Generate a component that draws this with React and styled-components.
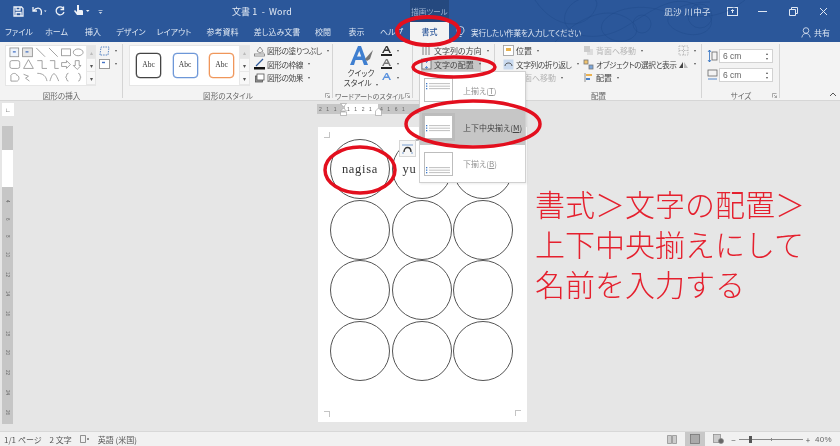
import React from "react";
import styled, { createGlobalStyle } from "styled-components";

const Global = createGlobalStyle`
  html, body { margin: 0; padding: 0; background: #e6e6e6; }
  * { box-sizing: border-box; }
  body { font-family: "Noto Sans CJK JP", "Liberation Sans", sans-serif; font-feature-settings: "palt"; }
`;

const Shell = styled.div`
  position: relative; width: 840px; height: 446px; overflow: hidden;
  display: flex; flex-direction: column; background: #e6e6e6; filter: blur(.35px);
`;

/* ---------- title bar ---------- */
const TitleBar = styled.div`
  position: relative; height: 22px; flex: none; background: #2b579a; color: #e4ebf5;
  display: flex; align-items: center; font-size: 8.5px;
`;
const Quick = styled.div`
  width: 232px; padding-left: 13px; display: flex; align-items: center; gap: 8px;
`;
const DocTitle = styled.div`
  width: 178px; font-size: 9px; letter-spacing: .1px; white-space: pre;
`;
const ContextTab = styled.div`
  width: 39px; height: 22px; background: #25497f; color: #9fb4d2; font-size: 7.5px;
  display: flex; align-items: center; justify-content: center; white-space: nowrap;
`;
const Account = styled.div`
  margin-left: auto; padding-right: 1px; display: flex; align-items: center;
`;
const UserName = styled.span` margin-right: 6px; font-size: 8.5px; letter-spacing: .4px; `;
const WinBtn = styled.span` width: 30.500px; display: flex; justify-content: center; `;
const Swirl = styled.svg` position: absolute; left: 530px; top: 0; pointer-events: none; `;

/* ---------- tabs ---------- */
const TabBar = styled.div`
  height: 20px; flex: none; background: #2b579a; color: #dde6f2; display: flex; align-items: center;
  font-size: 8px;
`;
const Tab = styled.div`
  width: ${p => p.$w}px; text-align: center; white-space: nowrap; height: 20px; line-height: 20px;
  ${p => p.$active && "background:#f3f3f3;color:#2b579a;font-weight:500;"}
`;
const TellMe = styled.div`
  margin-left: 7px; display: flex; align-items: center; gap: 6px; color: #dfe7f3; font-size: 7.6px; letter-spacing: -.2px; white-space: nowrap;
`;
const Share = styled.div`
  margin-left: auto; padding-right: 10px; display: flex; align-items: center; gap: 3px; font-size: 8px;
`;

/* ---------- ribbon ---------- */
const Ribbon = styled.div`
  height: 59px; flex: none; background: #f3f3f3; border-bottom: 1px solid #d6d6d6;
  display: flex; color: #444; font-size: 8px; position: relative;
`;
const Group = styled.div`
  width: ${p => p.$w}px; flex: none; display: flex; flex-direction: column; position: relative;
  &::after { content: ""; position: absolute; right: 0; top: 2px; bottom: 2px; width: 1px; background: #d4d4d4; }
`;
const GroupBody = styled.div` flex: 1; display: flex; min-height: 0; `;
const GroupLabel = styled.div`
  height: 10px; line-height: 12px; text-align: ${p => p.$tight ? "left" : "center"}; color: #666; white-space: nowrap; position: relative;
  font-size: ${p => p.$tight ? "7.1px" : "7.6px"}; padding-left: ${p => p.$tight ? "2px" : "0"};
`;
const Launcher = styled.svg` position: absolute; right: 3px; top: 3px; `;
const Gallery = styled.div`
  margin: 3px 0 0 ${p => p.$left}px; height: 41px; width: ${p => p.$w}px; background: #fff; border: 1px solid #e6e6e6; display: flex; flex: none;
`;
const GalleryMain = styled.div`
  flex: 1; display: flex; align-items: center; justify-content: ${p => p.$spread ? "space-between" : "flex-start"}; padding: ${p => p.$spread ? "0 5px 0 6px" : "0 0 0 1px"};
`;
const ScrollCol = styled.div`
  width: 10px; display: grid; grid-template-rows: repeat(3, 1fr); background: #f6f6f6; border-left: 1px solid #e8e8e8;
  color: #666; font-size: 6px; text-align: center;
`;
const ScrollCell = styled.div`
  display: flex; align-items: center; justify-content: center; border-bottom: 1px solid #e8e8e8;
  background: ${p => p.$off ? "#e5e5e5" : "#f8f8f8"}; color: ${p => p.$off ? "#bbb" : "#555"};
`;
const AbcBox = styled.div`
  width: 25px; height: 25px; border-radius: 4px; border: 1px solid ${p => p.$c}; color: #333; background: #fff;
  font-family: "Liberation Serif", serif; font-size: 7.5px; display: flex; align-items: center; justify-content: center; padding-bottom: 3px;
  box-shadow: 0 0 0 .3px ${p => p.$c};
`;
const Stack = styled.div`
  margin: 2px 0 0 ${p => p.$left || 0}px; display: flex; flex-direction: column; width: ${p => p.$w ? p.$w + "px" : "auto"}; flex: none;
`;
const Cmd = styled.div`
  height: 13.500px; flex: none; display: flex; align-items: center; gap: 2px; white-space: nowrap; font-size: 8px;
  color: ${p => p.$off ? "#b4b4b4" : "#444"};
  ${p => p.$tight && "font-size:7.7px;letter-spacing:-.4px;"}
  ${p => p.$hot && "background:#c6c6c6;width:60px;"}
  & > svg { flex: none; }
`;
const Caret = styled.span`
  display: inline-block; width: 0; height: 0; margin-left: 3px; border-left: 1.8px solid transparent; border-right: 1.8px solid transparent;
  border-top: 2.2px solid #555; flex: none;
`;
const QuickStyle = styled.div`
  width: 36px; margin: 3px 0 0 10px; display: flex; flex-direction: column; align-items: center; line-height: 10px; font-size: 7.8px; white-space: nowrap; flex: none;
`;
const SizeStack = styled.div` margin: 4px 0 0 5px; display: flex; flex-direction: column; flex: none; `;
const SizeRow = styled.div` display: flex; align-items: center; height: 19.500px; gap: 1px; `;
const SizeInput = styled.div`
  width: 54px; height: 14px; background: #fff; border: 1px solid #d2d2d2; display: flex; align-items: center; justify-content: space-between;
  padding: 0 4px 0 3px; font-size: 8.5px; color: #666; font-family: "Liberation Sans", sans-serif;
`;
const Spin = styled.span` display: flex; flex-direction: column; font-size: 4px; line-height: 5px; color: #555; `;
const Collapse = styled.svg` position: absolute; right: 3px; bottom: 3px; `;

/* ---------- workspace ---------- */
const Workspace = styled.div`
  flex: 1; min-height: 0; display: flex; background: #e6e6e6;
`;
const LeftRail = styled.div`
  width: 318px; flex: none; padding: 2px 0 0 2px; display: flex; flex-direction: column;
`;
const Corner = styled.div`
  width: 12px; height: 13px; background: #fff; display: flex; align-items: center; justify-content: center;
  font-size: 6px; color: #333; font-weight: 700; font-family: "Liberation Sans", sans-serif;
`;
const VRuler = styled.div`
  margin-top: 10px; width: 11px; height: 298px; background: #c6c6c6; position: relative; display: flex; flex-direction: column;
  align-items: center; color: #666; font-size: 4.5px; font-family: "Liberation Sans", sans-serif;
`;
const VWhite = styled.div` margin-top: 24px; width: 11px; height: 37px; background: #fff; flex: none; `;
const VNums = styled.div`
  flex: 1; display: flex; flex-direction: column; justify-content: space-around; align-items: center; padding: 6px 0 2px; 
`;
const VNum = styled.span` writing-mode: vertical-rl; `;
const PageCol = styled.div` flex: 1; display: flex; flex-direction: column; `;
const HRuler = styled.div`
  position: relative; margin: 3px 0 13px -1px; height: 10px; width: 105px; background: #c6c6c6; display: flex; font-size: 5px; color: #666;
  font-family: "Liberation Sans", sans-serif; line-height: 10px; letter-spacing: 1.6px; flex: none;
`;
const HGray = styled.div` width: ${p => p.$w}px; padding-left: 2px; white-space: nowrap; overflow: hidden; `;
const HWhite = styled.div` width: 33px; background: #fff; white-space: nowrap; overflow: hidden; padding-left: 2px; `;
const Indent = styled.svg` position: absolute; left: ${p => p.$x}px; top: -1px; `;
const Page = styled.div`
  width: 209px; height: 295px; background: #fff; position: relative; padding: 12px 0 0 12px;
  display: grid; grid-template-columns: repeat(3, 61.5px); grid-auto-rows: 60.5px;
`;
const CropMark = styled.i`
  position: absolute; width: 6px; height: 6px; border-color: #c4c4c4; border-style: solid; border-width: 0;
  ${p => p.$pos}
`;
const Circle = styled.div`
  width: 60px; height: 60px; border-radius: 50%; border: 1px solid #555; display: flex; align-items: center; justify-content: center;
  font-family: "Liberation Serif", serif; font-size: 12.5px; letter-spacing: .7px; color: #333; overflow: hidden; white-space: nowrap;
  padding-right: ${p => p.$pad || 0}px;
`;

/* ---------- status bar ---------- */
const StatusBar = styled.div`
  height: 15px; flex: none; background: #f1f1f1; border-top: 1px solid #d8d8d8; display: flex; align-items: center;
  font-size: 8px; color: #555; padding-left: 4px; font-feature-settings: "palt";
`;
const StatusItem = styled.span` margin-right: ${p => p.$gap}px; white-space: nowrap; display: inline-flex; `;
const StatusRight = styled.div` margin-left: auto; display: flex; align-items: center; height: 100%; padding-right: 8px; `;
const ViewBtn = styled.div`
  width: 20px; height: 14px; display: flex; align-items: center; justify-content: center; background: ${p => p.$on ? "#c8c8c8" : "transparent"}; margin-right: 3px;
`;
const Slider = styled.div`
  position: relative; width: 64px; height: 1px; background: #8a8a8a; margin: 0 3px;
`;
const Thumb = styled.div` position: absolute; left: 10px; top: -3px; width: 3px; height: 7px; background: #555; `;
const Tick = styled.div` position: absolute; left: 32px; top: -1px; width: 1px; height: 3px; background: #8a8a8a; `;
const ZoomPct = styled.span` margin-left: 5px; font-size: 8px; color: #666; font-family: "Liberation Sans", sans-serif; letter-spacing: .3px; `;

/* ---------- overlays ---------- */
const Menu = styled.div`
  position: absolute; left: 419px; top: 71px; width: 107px; height: 112px; background: #fff; border: 1px solid #d0d0d0;
  display: flex; flex-direction: column; box-shadow: 1px 1px 2px rgba(0,0,0,.08);
`;
const MenuRow = styled.div`
  flex: 1; display: flex; align-items: center; gap: 10px; padding-left: 4px; font-size: 8px; background: ${p => p.$on ? "#c6c6c6" : "#fff"};
  color: ${p => p.$on ? "#444" : "#939393"};
`;
const MenuThumb = styled.div`
  width: 29px; height: 24px; background: #fff; border: 1px solid #bdbdbd; box-shadow: ${p => p.$on ? "0 0 0 2px #bcbcbc" : "none"}; flex: none;
  display: flex; align-items: center; justify-content: center;
`;
const U = styled.span` text-decoration: underline; `;
const Floating = styled.div`
  position: absolute; left: 399px; top: 140px; width: 17px; height: 17px; background: #f7f7f7; border: 1px solid #d6d6d6; display: flex; align-items: center; justify-content: center;
`;
const Marks = styled.svg` position: absolute; left: 0; top: 0; pointer-events: none; `;
const Note = styled.div`
  position: absolute; left: 535px; top: 183px; color: #e5202e; font-size: 30px; line-height: 40px; font-weight: 300; white-space: nowrap;
  font-feature-settings: normal;
`;

/* ---------- drawings ---------- */
const g = "#8a8a8a";
const Shapes = () => (
  <svg width="79" height="39" viewBox="0 0 79 40" fill="none" stroke={g} strokeWidth=".8">
    <rect x="2" y="2" width="9" height="9" fill="#eef3fa" /><rect x="15" y="2" width="10" height="9" fill="#e7e7e7" />
    <path d="M5 6h3M18 6h3" stroke="#4472c4" strokeWidth="1.4" />
    <path d="M29 2l9 9M42 2l9 9" /><rect x="55" y="3" width="9" height="7" /><ellipse cx="72" cy="6.500" rx="5" ry="3.500" />
    <rect x="2" y="15" width="10" height="8" rx="2" /><path d="M16 23l5-9 5 9zM30 15h5v8h5M43 15h5v8h4" />
    <path d="M55 17h5v-2l4 4-4 4v-2h-5zM69 15h4v5h2l-4 4-4-4h2z" />
    <path d="M3 30c2-3 6-2 6 0 3 0 3 6 0 6H3zM16 29l5 2-3 2 4 3M30 28c6 0 9 3 10 8M43 36c3-10 5-10 9 0M62 28c-3 0-1 4-3 4 2 0 0 4 3 4M72 28c3 0 1 4 3 4-2 0 0 4-3 4" />
  </svg>
);
const Lines = ({ pos }) => {
  const y = pos === "top" ? 3 : pos === "mid" ? 8 : 13;
  return (
    <svg width="27" height="20" viewBox="0 0 27 20" fill="none">
      {[0, 2.500, 5].map(d => <React.Fragment key={d}>
        <rect x="1" y={y + d} width="1.300" height="1.300" fill="#3c78c8" />
        <rect x="4" y={y + d + .2} width="21" height=".9" fill="#b8b8b8" />
      </React.Fragment>)}
    </svg>
  );
};
const Launch = () => <Launcher width="5" height="5" viewBox="0 0 5 5" fill="none" stroke="#888" strokeWidth=".7"><path d="M.5 4.500V.5h4M2 2l2.500 2.500M4.500 2.500v2h-2" /></Launcher>;

const Tabs = [["ファイル", 38], ["ホーム", 37], ["挿入", 36], ["デザイン", 40], ["レイアウト", 46], ["参考資料", 51], ["差し込み文書", 58], ["校閲", 34], ["表示", 33], ["ヘルプ", 37]];
const Names = ["nagisa", "yu", "", "", "", "", "", "", "", "", "", ""];

export default function App() {
  return (
    <Shell>
      <Global />
      <TitleBar>
        <Quick>
          <svg width="11" height="11" viewBox="0 0 11 11" fill="none" stroke="#eef2f8" strokeWidth="1.300"><path d="M1 1h7.500L10 2.500V10H1zM3 1v3h4V1M3 10V6.500h5V10" /></svg>
          <svg width="15" height="10" viewBox="0 0 15 10" fill="none" stroke="#eef2f8" strokeWidth="1.300"><path d="M1 1v4h4M1.500 5C4 1 9 1 9.500 6L9 9" /><path d="M12 4.500h2.500l-1.200 1.500z" fill="#eef2f8" stroke="none" /></svg>
          <svg width="10" height="10" viewBox="0 0 10 10" fill="none" stroke="#eef2f8" strokeWidth="1.300"><path d="M8 2A4 4 0 1 0 9 6M8.500.5v3h-3" /></svg>
          <svg width="17" height="12" viewBox="0 0 17 12" fill="#eef2f8"><path d="M4 0h2v5h3c1 0 1 1 1 2v3H4L1 6l1-1 2 2z" /><path d="M13 5h3.500l-1.700 2z" /></svg>
          <svg width="5" height="5" viewBox="0 0 5 5" fill="#c6d2e4"><path d="M.5 1h4v.8h-4zM.8 3h3.400L2.500 5z" /></svg>
        </Quick>
        <DocTitle>{"文書 1  -  Word"}</DocTitle>
        <ContextTab>描画ツール</ContextTab>
        <Swirl width="230" height="42" viewBox="0 0 230 42" fill="none" stroke="#1d4685" strokeOpacity=".55" strokeWidth=".7">
          <path d="M5 0c20 30 50 30 60 10S40-5 35 15s30 30 60 12 50-35 75-20 5 35-20 25-10-30 30-30" />
          <path d="M25 42C50 15 80 5 100 20s-10 30-25 15 20-35 55-25 60 10 85-10" />
          <circle cx="112" cy="24" r="9" /><circle cx="170" cy="16" r="12" />
        </Swirl>
        <Account>
          <UserName>凪沙 川中子</UserName>
          <WinBtn><svg width="11" height="9" viewBox="0 0 11 9" fill="none" stroke="#dfe7f3"><rect x=".5" y=".5" width="10" height="8" /><path d="M5.500 6V3M4 4l1.500-1.500L7 4" /></svg></WinBtn>
          <WinBtn><svg width="9" height="9"><rect y="4" width="9" height="1" fill="#dfe7f3" /></svg></WinBtn>
          <WinBtn><svg width="9" height="9" viewBox="0 0 9 9" fill="none" stroke="#dfe7f3"><path d="M.5 2.500h6v6h-6zM2.500 2.500v-2h6v6h-2" /></svg></WinBtn>
          <WinBtn><svg width="9" height="9" viewBox="0 0 9 9" stroke="#dfe7f3"><path d="M1 1l7 7M8 1L1 8" /></svg></WinBtn>
        </Account>
      </TitleBar>

      <TabBar>
        {Tabs.map(([t, w]) => <Tab key={t} $w={w}>{t}</Tab>)}
        <Tab $w={39} $active>書式</Tab>
        <TellMe>
          <svg width="9" height="12" viewBox="0 0 9 12" fill="none" stroke="#e4ebf5" strokeWidth=".8"><path d="M3 8.500C2 6.500 1 6 1 4a3.500 3.500 0 0 1 7 0c0 2-1 2.500-2 4.500zM3.500 10.500h2" /></svg>
          <span>実行したい作業を入力してください</span>
        </TellMe>
        <Share>
          <svg width="10" height="11" viewBox="0 0 10 11" fill="none" stroke="#e4ebf5" strokeWidth=".8"><circle cx="5" cy="3.500" r="2.800" /><path d="M.8 10.500C1.500 7.500 3 6.500 5 6.500s3.500 1 4.200 4" /></svg>
          <span>共有</span>
        </Share>
      </TabBar>

      <Ribbon>
        <Group $w={123}>
          <GroupBody>
            <Gallery $left={5} $w={91}>
              <GalleryMain><Shapes /></GalleryMain>
              <ScrollCol><ScrollCell $off>▴</ScrollCell><ScrollCell>▾</ScrollCell><ScrollCell>▾</ScrollCell></ScrollCol>
            </Gallery>
            <Stack $left={3}>
              <Cmd>
                <svg width="11" height="10" viewBox="0 0 11 10" fill="none" stroke="#5a86c4" strokeDasharray="1.500 1"><path d="M1 9l1-8h8l-1 8z" /></svg>
                <Caret />
              </Cmd>
              <Cmd>
                <svg width="11" height="10" viewBox="0 0 11 10" fill="#fff" stroke="#999"><rect x=".5" y=".5" width="10" height="9" /><path d="M3 3.500h3" stroke="#4472c4" strokeWidth="1.400" /></svg>
                <Caret />
              </Cmd>
            </Stack>
          </GroupBody>
          <GroupLabel>図形の挿入</GroupLabel>
        </Group>

        <Group $w={210}>
          <GroupBody>
            <Gallery $left={6} $w={121}>
              <GalleryMain $spread>
                <AbcBox $c="#444">Abc</AbcBox>
                <AbcBox $c="#6d97d8">Abc</AbcBox>
                <AbcBox $c="#f0965a">Abc</AbcBox>
              </GalleryMain>
              <ScrollCol><ScrollCell $off>▴</ScrollCell><ScrollCell>▾</ScrollCell><ScrollCell>▾</ScrollCell></ScrollCol>
            </Gallery>
            <Stack $left={4}>
              <Cmd $tight>
                <svg width="11" height="12" viewBox="0 0 11 12" fill="none" stroke="#777" strokeWidth=".8"><path d="M3 6l3-4 3 4-3 2zM9 7v1" /><rect x=".5" y="9" width="10" height="2" fill="#fff" /></svg>
                図形の塗りつぶし<Caret />
              </Cmd>
              <Cmd $tight>
                <svg width="11" height="12" viewBox="0 0 11 12" fill="none"><path d="M2 8l7-7" stroke="#2b579a" strokeWidth="1.300" /><rect y="9" width="11" height="2.500" fill="#111" /></svg>
                図形の枠線<Caret />
              </Cmd>
              <Cmd $tight>
                <svg width="11" height="12" viewBox="0 0 11 12" fill="#fff" stroke="#555" strokeWidth=".8"><rect x="1.500" y="4" width="7" height="6" fill="#999" /><rect x="3" y="2" width="7" height="6" /></svg>
                図形の効果<Caret />
              </Cmd>
            </Stack>
          </GroupBody>
          <GroupLabel>図形のスタイル<Launch /></GroupLabel>
        </Group>

        <Group $w={80}>
          <GroupBody>
            <QuickStyle>
              <svg width="25" height="23" viewBox="0 0 25 23" fill="none">
                <path d="M1 20L9 1h3l7 19h-4l-1.800-5H6.500L5 20zM8 11.500h4.200L10.300 6z" fill="#3f7fd0" />
                <path d="M16 14l8-9-3 9-3 2z" fill="#777" />
              </svg>
              <span>クイック</span>
              <span>スタイル <Caret /></span>
            </QuickStyle>
            <Stack $left={2}>
              {["#111", "#777", "#5a92de"].map(c => (
                <Cmd key={c}>
                  <svg width="11" height="12" viewBox="0 0 11 12"><path d="M1 8L5 1h1.500l3.500 7H8.300l-.8-2H3.500l-.8 2zM4.200 4.500h2.500L5.500 2.300z" fill={c === "#111" ? "#333" : c} /><rect y="9" width="11" height="2" fill={c === "#5a92de" ? "transparent" : "#222"} /></svg>
                  <Caret />
                </Cmd>
              ))}
            </Stack>
          </GroupBody>
          <GroupLabel $tight>ワードアートのスタイル<Launch /></GroupLabel>
        </Group>

        <Group $w={82}>
          <GroupBody>
            <Stack $left={8} $w={70}>
              <Cmd>
                <svg width="11" height="11" viewBox="0 0 11 11" stroke="#666" strokeWidth=".8"><path d="M2 2v8M5 2v8M8 2v8" /></svg>
                文字列の方向<Caret />
              </Cmd>
              <Cmd $hot>
                <svg width="11" height="11" viewBox="0 0 11 11" fill="none" stroke="#666" strokeWidth=".8"><rect x="1" y="1" width="9" height="9" fill="#eee" /><path d="M5.500 2v2M4 3l1.500-1.500L7 3M5.500 9V7M4 8l1.500 1.500L7 8" stroke="#3c78c8" /></svg>
                文字の配置<Caret />
              </Cmd>
            </Stack>
          </GroupBody>
          <GroupLabel />
        </Group>

        <Group $w={207}>
          <GroupBody>
            <Stack $left={8} $w={81}>
              <Cmd><svg width="11" height="11" viewBox="0 0 11 11" fill="#fff" stroke="#999" strokeWidth=".8"><rect x=".5" y=".5" width="10" height="10" /><rect x="3" y="3" width="5" height="3" fill="#e8b24d" stroke="none" /></svg> 位置<Caret /></Cmd>
              <Cmd $tight><svg width="11" height="11" viewBox="0 0 11 11" fill="#c9d9ee" stroke="#888" strokeWidth=".8"><rect x=".5" y=".5" width="10" height="10" stroke="none" /><path d="M2 7c0-4 7-4 7 0" fill="none" stroke="#333" /></svg> 文字列の折り返し<Caret /></Cmd>
              <Cmd $off><svg width="11" height="11" viewBox="0 0 11 11" fill="#ddd"><rect x="1" y="1" width="6" height="6" /><rect x="4" y="4" width="6" height="6" fill="#eee" /></svg> 前面へ移動<Caret /></Cmd>
            </Stack>
            <Stack $left={-1} $w={93}>
              <Cmd $off><svg width="11" height="11" viewBox="0 0 11 11" fill="#ddd"><rect x="4" y="4" width="6" height="6" /><rect x="1" y="1" width="6" height="6" fill="#ccc" /></svg>背面へ移動<Caret /></Cmd>
              <Cmd $tight><svg width="11" height="11" viewBox="0 0 11 11" fill="none" stroke="#777" strokeWidth=".8"><rect x="1" y="1" width="4" height="4" fill="#f0c36d" /><rect x="6" y="6" width="4" height="4" fill="#7aa5da" /></svg>オブジェクトの選択と表示</Cmd>
              <Cmd><svg width="11" height="11" viewBox="0 0 11 11" fill="none" stroke="#777" strokeWidth=".8"><path d="M2 1v9" /><rect x="3" y="2" width="6" height="2" fill="#eab150" stroke="none" /><rect x="3" y="6" width="4" height="2" fill="#4a82c8" stroke="none" /></svg>配置<Caret /></Cmd>
            </Stack>
            <Stack $left={2}>
              <Cmd $off><svg width="11" height="11" viewBox="0 0 11 11" fill="none" stroke="#bbb" strokeDasharray="1.500 1"><rect x="1" y="1" width="9" height="9" /><path d="M5.500 1v9M1 5.500h9" /></svg><Caret /></Cmd>
              <Cmd><svg width="11" height="11" viewBox="0 0 11 11"><path d="M1 9l4-6v6z" fill="#444" /><path d="M6 9V3l4 6z" fill="#bbb" /></svg><Caret /></Cmd>
            </Stack>
          </GroupBody>
          <GroupLabel>配置</GroupLabel>
        </Group>

        <Group $w={78}>
          <GroupBody>
            <SizeStack>
              <SizeRow>
                <svg width="11" height="14" viewBox="0 0 11 14" fill="none" stroke="#666" strokeWidth=".8"><rect x="5" y="3" width="5" height="8" /><path d="M2.500 1v12" stroke="#2b6cc0" /><path d="M1 3l1.500-2L4 3M1 11l1.500 2L4 11" stroke="#2b6cc0" /></svg>
                <SizeInput>6 cm<Spin><span>▴</span><span>▾</span></Spin></SizeInput>
              </SizeRow>
              <SizeRow>
                <svg width="11" height="12" viewBox="0 0 11 12" fill="none" stroke="#666" strokeWidth=".8"><rect x="1" y="1" width="9" height="6" /><path d="M1 10h9" stroke="#2b6cc0" /></svg>
                <SizeInput>6 cm<Spin><span>▴</span><span>▾</span></Spin></SizeInput>
              </SizeRow>
            </SizeStack>
          </GroupBody>
          <GroupLabel>サイズ<Launch /></GroupLabel>
        </Group>

        <Collapse width="8" height="5" viewBox="0 0 8 5" fill="none" stroke="#555"><path d="M1 4l3-3 3 3" /></Collapse>
      </Ribbon>

      <Workspace>
        <LeftRail>
          <Corner>∟</Corner>
          <VRuler>
            <VWhite />
            <VNums>{[4, 6, 8, 10, 12, 14, 16, 18, 20, 22, 24, 26].map(n => <VNum key={n}>{n}</VNum>)}</VNums>
          </VRuler>
        </LeftRail>
        <PageCol>
          <HRuler>
            <HGray $w={28}>2 1 1</HGray>
            <HWhite>1 1 2 1</HWhite>
            <HGray $w={44}>4 1 6 1</HGray>
            <Indent $x={23} width="7" height="13" viewBox="0 0 7 13" fill="#fff" stroke="#999" strokeWidth=".6"><path d="M.5.5h6L3.500 4zM3.500 5l3 3H.5zM.5 9h6v3.500h-6z" /></Indent>
            <Indent $x={58} width="7" height="13" viewBox="0 0 7 13" fill="#fff" stroke="#999" strokeWidth=".6"><path d="M3.500 5l3 3v4.500h-6V8z" /></Indent>
          </HRuler>
          <Page>
            <CropMark $pos="left:6px;top:5px;border-right-width:1px;border-bottom-width:1px;" />
            <CropMark $pos="left:6px;bottom:5px;border-right-width:1px;border-top-width:1px;" />
            <CropMark $pos="right:6px;bottom:6px;border-left-width:1px;border-top-width:1px;" />
            {Names.map((n, i) => <Circle key={i} $pad={i === 1 ? 24 : 0}>{n}</Circle>)}
          </Page>
        </PageCol>
      </Workspace>

      <StatusBar>
        <StatusItem $gap={8}>1/1 ページ</StatusItem>
        <StatusItem $gap={8}>2 文字</StatusItem>
        <StatusItem $gap={8}><svg width="10" height="9" viewBox="0 0 10 9" fill="none" stroke="#777" strokeWidth=".8"><path d="M.5.5h5v7h-5zM7 3l2 2M9 3L7 5" /></svg></StatusItem>
        <StatusItem $gap={0}>英語 (米国)</StatusItem>
        <StatusRight>
          <ViewBtn><svg width="10" height="9" viewBox="0 0 10 9" fill="#ccc" stroke="#888" strokeWidth=".7"><path d="M.5.5h4v8h-4zM5.500.5h4v8h-4z" /></svg></ViewBtn>
          <ViewBtn $on><svg width="10" height="10" viewBox="0 0 10 10" fill="#aaa" stroke="#777" strokeWidth=".8"><rect x=".5" y=".5" width="9" height="9" /></svg></ViewBtn>
          <ViewBtn><svg width="11" height="10" viewBox="0 0 11 10" fill="#ccc" stroke="#888" strokeWidth=".7"><rect x=".5" y=".5" width="7" height="8" /><circle cx="8" cy="7" r="2.500" fill="#666" /></svg></ViewBtn>
          <span>−</span>
          <Slider><Thumb /><Tick /></Slider>
          <span>+</span>
          <ZoomPct>40%</ZoomPct>
        </StatusRight>
      </StatusBar>

      <Floating>
        <svg width="13" height="12" viewBox="0 0 13 12" fill="none" stroke="#7b9fd0"><path d="M1 2h11M1 10h2M10 10h2" /><path d="M3 9c0-6 7-6 7 0" stroke="#333" strokeWidth="1.400" /></svg>
      </Floating>

      <Menu>
        <MenuRow><MenuThumb><Lines pos="top" /></MenuThumb><span>上揃え(<U>T</U>)</span></MenuRow>
        <MenuRow $on><MenuThumb $on><Lines pos="mid" /></MenuThumb><span>上下中央揃え(<U>M</U>)</span></MenuRow>
        <MenuRow><MenuThumb><Lines pos="bot" /></MenuThumb><span>下揃え(<U>B</U>)</span></MenuRow>
      </Menu>

      <Note>
        <div>書式＞文字の配置＞</div>
        <div>上下中央揃えにして</div>
        <div>名前を入力する</div>
      </Note>

      <Marks width="840" height="446" fill="none" stroke="#e30f1e">
        <ellipse cx="428" cy="31" rx="31" ry="14" strokeWidth="4" />
        <ellipse cx="454" cy="67" rx="41" ry="10" strokeWidth="3.500" />
        <ellipse cx="473" cy="124" rx="67" ry="23" strokeWidth="3.500" />
        <ellipse cx="360" cy="170" rx="35" ry="23" strokeWidth="3.500" />
      </Marks>
    </Shell>
  );
}
